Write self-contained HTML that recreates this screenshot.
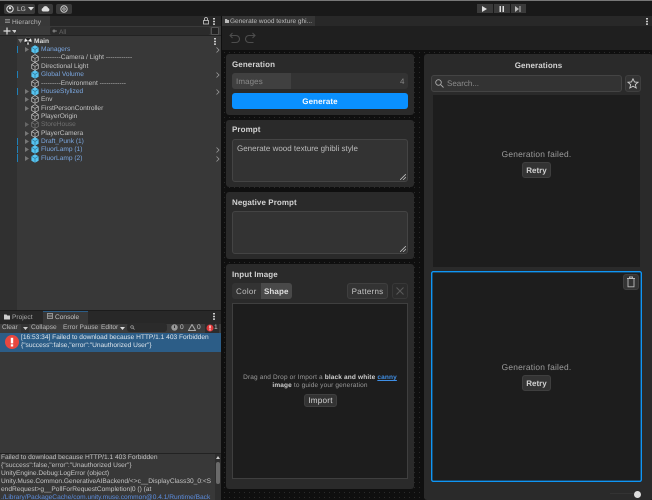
<!DOCTYPE html>
<html><head><meta charset="utf-8"><style>
html,body{margin:0;padding:0;background:#0f0f0f}
#r{position:relative;width:652px;height:500px;overflow:hidden;background:#0f0f0f;font-family:"Liberation Sans",sans-serif;font-size:6.600px;color:#c4c4c4;text-rendering:geometricPrecision}
#r div,#r span.a,#r svg{position:absolute}
.t{white-space:nowrap;line-height:9px}
.b{color:#7ba7e0}
.card{background:#2a2a2a;border-radius:3px}
.h{font-size:8px;font-weight:bold;color:#d2d2d2;letter-spacing:.08px;white-space:nowrap;line-height:10px}
.ta{background:#333;border:1px solid #444;border-radius:3px;box-sizing:border-box}
.btn{background:#333;border:1px solid #3f3f3f;border-radius:3px;box-sizing:border-box;text-align:center;color:#d0d0d0;font-size:8px;white-space:nowrap}
.c{text-align:center;white-space:nowrap}
.bar{background:#1f80b8;width:1px;height:7px;left:17px}
</style></head><body><div id="r">
<!-- top bar -->
<div style="left:0;top:0;width:652px;height:1px;background:#777"></div>
<div style="left:0;top:1px;width:652px;height:15px;background:#191919"></div>
<div style="left:4px;top:4px;width:31px;height:10px;background:#3a3a3a;border-radius:2px"></div>
<svg style="left:6px;top:5px" width="8" height="8" viewBox="0 0 8 8"><circle cx="4" cy="4" r="3.2" fill="none" stroke="#ddd" stroke-width="1.1"/><circle cx="4" cy="3.2" r="1.2" fill="#ddd"/></svg>
<div class="t" style="left:17px;top:5px;color:#ccc">LG</div>
<svg style="left:28px;top:7px" width="6" height="4"><path d="M0 0H6L3 3.5Z" fill="#ddd"/></svg>
<div style="left:38px;top:4px;width:15px;height:10px;background:#3a3a3a;border-radius:2px"></div>
<svg style="left:41px;top:5px" width="9" height="7" viewBox="0 0 9 7"><path d="M2 6.500A1.800 1.800 0 0 1 2 3 2.600 2.600 0 0 1 7 3 1.800 1.800 0 0 1 7 6.500Z" fill="#ddd"/></svg>
<div style="left:56px;top:4px;width:16px;height:10px;background:#3a3a3a;border-radius:2px"></div>
<svg style="left:60px;top:5px" width="8" height="8" viewBox="0 0 8 8"><circle cx="4" cy="4" r="3.200" fill="none" stroke="#ccc"/><circle cx="4" cy="4" r="1.200" fill="none" stroke="#ccc" stroke-width=".8"/></svg>
<div style="left:477px;top:4px;width:16px;height:9px;background:#3a3a3a"></div>
<div style="left:494px;top:4px;width:16px;height:9px;background:#3a3a3a"></div>
<div style="left:511px;top:4px;width:15px;height:9px;background:#3a3a3a"></div>
<svg style="left:482px;top:6px" width="6" height="6"><path d="M0 0L5 3 0 6Z" fill="#ddd"/></svg>
<svg style="left:499px;top:6px" width="6" height="6"><path d="M0.500 0H2V6H0.500ZM3.500 0H5V6H3.500Z" fill="#ddd"/></svg>
<svg style="left:515px;top:6px" width="7" height="6"><path d="M0 0L4 3 0 6ZM4.500 0H5.500V6H4.500Z" fill="#bbb"/></svg>

<!-- hierarchy -->
<div style="left:0;top:16px;width:221px;height:294px;background:#383838"></div>
<div style="left:0;top:16px;width:50px;height:10px;background:#383838"></div>
<div style="left:50px;top:16px;width:171px;height:10px;background:#282828"></div>
<div style="left:0;top:26px;width:221px;height:10px;background:#3a3a3a;border-bottom:1px solid #222;box-sizing:border-box"></div>
<div style="left:0;top:36px;width:17px;height:274px;background:#303030"></div>
<div style="left:221px;top:16px;width:4px;height:484px;background:#0f0f0f"></div>
<div class="t" style="left:12px;top:18px;color:#bbb;letter-spacing:.1px">Hierarchy</div>
<svg style="left:5px;top:19px" width="5" height="4"><path d="M0 .5H5M0 2H5M0 3.500H5" stroke="#999" stroke-width=".7"/></svg>
<svg style="left:203px;top:17px" width="6" height="8"><rect x=".5" y="3.500" width="5" height="3.500" fill="none" stroke="#ccc" stroke-width=".8"/><path d="M1.500 3.500V2A1.500 1.500 0 0 1 4.500 2V3.500" fill="none" stroke="#ccc" stroke-width=".8"/></svg>
<svg style="left:213px;top:18px" width="2" height="7"><path d="M0 0H2V1.500H0ZM0 2.700H2V4.200H0ZM0 5.400H2V6.900H0Z" fill="#ccc"/></svg>
<svg style="left:3px;top:27px" width="13" height="8"><path d="M4 .5V7.500M.5 4H7.500" stroke="#ddd" stroke-width="1.200"/><path d="M10 3H15L12.500 6Z" fill="#ccc" transform="translate(-1 0)"/></svg>
<div style="left:50px;top:27px;width:160px;height:8px;background:#2b2b2b;border-radius:2px"></div>
<div class="t" style="left:59px;top:28px;color:#666">All</div>
<svg style="left:52px;top:29px" width="5" height="4"><circle cx="2" cy="2" r="1.500" fill="#777"/><path d="M3 2H5" stroke="#777"/></svg>
<div style="left:211px;top:27px;width:8px;height:8px;background:#222;border-radius:1px;border:1px solid #555;box-sizing:border-box"></div>

<svg style="left:18px;top:39px" width="5" height="4"><path d="M0 0H5L2.500 4Z" fill="#888"/></svg>
<svg style="left:24px;top:37px" width="8" height="8" viewBox="0 0 8 8"><circle cx="4" cy="4" r="3.600" fill="#eee"/><path d="M4 4L1.500 1.500A3.500 3.500 0 0 1 6.500 1.500ZM4 4L7.500 5A3.500 3.500 0 0 1 5 7.500ZM4 4L3 7.500A3.500 3.500 0 0 1 .5 5Z" fill="#222"/></svg>
<div class="t" style="left:34px;top:37px;font-weight:bold;color:#ddd">Main</div>
<svg style="left:214px;top:38px" width="2" height="7"><path d="M0 0H2V1.500H0ZM0 2.700H2V4.200H0ZM0 5.400H2V6.900H0Z" fill="#ccc"/></svg>

<div class="bar" style="top:46px"></div><div class="bar" style="top:71px"></div><div class="bar" style="top:88px"></div><div class="bar" style="top:138px"></div><div class="bar" style="top:146px"></div><div class="bar" style="top:154px;height:8px"></div>

<svg style="left:25px;top:47px" width="4" height="5"><path d="M0 0L4 2.500 0 5Z" fill="#777"/></svg>
<svg style="left:25px;top:89px" width="4" height="5"><path d="M0 0L4 2.500 0 5Z" fill="#777"/></svg>
<svg style="left:25px;top:97px" width="4" height="5"><path d="M0 0L4 2.500 0 5Z" fill="#777"/></svg>
<svg style="left:25px;top:106px" width="4" height="5"><path d="M0 0L4 2.500 0 5Z" fill="#777"/></svg>
<svg style="left:25px;top:122px" width="4" height="5"><path d="M0 0L4 2.500 0 5Z" fill="#666"/></svg>
<svg style="left:25px;top:131px" width="4" height="5"><path d="M0 0L4 2.500 0 5Z" fill="#777"/></svg>
<svg style="left:25px;top:139px" width="4" height="5"><path d="M0 0L4 2.500 0 5Z" fill="#777"/></svg>
<svg style="left:25px;top:147px" width="4" height="5"><path d="M0 0L4 2.500 0 5Z" fill="#777"/></svg>
<svg style="left:25px;top:156px" width="4" height="5"><path d="M0 0L4 2.500 0 5Z" fill="#777"/></svg>

<svg style="left:31px;top:45px" width="8" height="9" viewBox="0 0 8 9"><path d="M4 .3L7.600 2.300V6.700L4 8.700 .4 6.700V2.300Z" fill="#55c3f0"/><path d="M.6 2.400L4 4.400 7.400 2.400M4 4.400V8.600" stroke="#2a6b88" stroke-width=".6" fill="none"/></svg>
<svg style="left:31px;top:70px" width="8" height="9" viewBox="0 0 8 9"><path d="M4 .3L7.600 2.300V6.700L4 8.700 .4 6.700V2.300Z" fill="#55c3f0"/><path d="M.6 2.400L4 4.400 7.400 2.400M4 4.400V8.600" stroke="#2a6b88" stroke-width=".6" fill="none"/></svg>
<svg style="left:31px;top:87px" width="8" height="9" viewBox="0 0 8 9"><path d="M4 .3L7.600 2.300V6.700L4 8.700 .4 6.700V2.300Z" fill="#55c3f0"/><path d="M.6 2.400L4 4.400 7.400 2.400M4 4.400V8.600" stroke="#2a6b88" stroke-width=".6" fill="none"/></svg>
<svg style="left:31px;top:137px" width="8" height="9" viewBox="0 0 8 9"><path d="M4 .3L7.600 2.300V6.700L4 8.700 .4 6.700V2.300Z" fill="#55c3f0"/><path d="M.6 2.400L4 4.400 7.400 2.400M4 4.400V8.600" stroke="#2a6b88" stroke-width=".6" fill="none"/></svg>
<svg style="left:31px;top:145px" width="8" height="9" viewBox="0 0 8 9"><path d="M4 .3L7.600 2.300V6.700L4 8.700 .4 6.700V2.300Z" fill="#55c3f0"/><path d="M.6 2.400L4 4.400 7.400 2.400M4 4.400V8.600" stroke="#2a6b88" stroke-width=".6" fill="none"/></svg>
<svg style="left:31px;top:154px" width="8" height="9" viewBox="0 0 8 9"><path d="M4 .3L7.600 2.300V6.700L4 8.700 .4 6.700V2.300Z" fill="#55c3f0"/><path d="M.6 2.400L4 4.400 7.400 2.400M4 4.400V8.600" stroke="#2a6b88" stroke-width=".6" fill="none"/></svg>

<svg style="left:31px;top:54px" width="8" height="9" viewBox="0 0 8 9"><path d="M4 .6L7.300 2.500V6.500L4 8.400 .7 6.500V2.500ZM.7 2.500L4 4.400 7.300 2.500M4 4.400V8.400" stroke="#c4c4c4" stroke-width=".7" fill="none"/></svg>
<svg style="left:31px;top:62px" width="8" height="9" viewBox="0 0 8 9"><path d="M4 .6L7.300 2.500V6.500L4 8.400 .7 6.500V2.500ZM.7 2.500L4 4.400 7.300 2.500M4 4.400V8.400" stroke="#c4c4c4" stroke-width=".7" fill="none"/></svg>
<svg style="left:31px;top:79px" width="8" height="9" viewBox="0 0 8 9"><path d="M4 .6L7.300 2.500V6.500L4 8.400 .7 6.500V2.500ZM.7 2.500L4 4.400 7.300 2.500M4 4.400V8.400" stroke="#c4c4c4" stroke-width=".7" fill="none"/></svg>
<svg style="left:31px;top:95px" width="8" height="9" viewBox="0 0 8 9"><path d="M4 .6L7.300 2.500V6.500L4 8.400 .7 6.500V2.500ZM.7 2.500L4 4.400 7.300 2.500M4 4.400V8.400" stroke="#c4c4c4" stroke-width=".7" fill="none"/></svg>
<svg style="left:31px;top:104px" width="8" height="9" viewBox="0 0 8 9"><path d="M4 .6L7.300 2.500V6.500L4 8.400 .7 6.500V2.500ZM.7 2.500L4 4.400 7.300 2.500M4 4.400V8.400" stroke="#c4c4c4" stroke-width=".7" fill="none"/></svg>
<svg style="left:31px;top:112px" width="8" height="9" viewBox="0 0 8 9"><path d="M4 .6L7.300 2.500V6.500L4 8.400 .7 6.500V2.500ZM.7 2.500L4 4.400 7.300 2.500M4 4.400V8.400" stroke="#c4c4c4" stroke-width=".7" fill="none"/></svg>
<svg style="left:31px;top:120px" width="8" height="9" viewBox="0 0 8 9"><path d="M4 .6L7.300 2.500V6.500L4 8.400 .7 6.500V2.500ZM.7 2.500L4 4.400 7.300 2.500M4 4.400V8.400" stroke="#777" stroke-width=".7" fill="none"/></svg>
<svg style="left:31px;top:129px" width="8" height="9" viewBox="0 0 8 9"><path d="M4 .6L7.300 2.500V6.500L4 8.400 .7 6.500V2.500ZM.7 2.500L4 4.400 7.300 2.500M4 4.400V8.400" stroke="#c4c4c4" stroke-width=".7" fill="none"/></svg>

<div class="t b" style="left:41px;top:45px">Managers</div>
<div class="t" style="left:41px;top:53px">---------Camera / Light ------------</div>
<div class="t" style="left:41px;top:62px">Directional Light</div>
<div class="t b" style="left:41px;top:70px">Global Volume</div>
<div class="t" style="left:41px;top:79px">---------Environment ------------</div>
<div class="t b" style="left:41px;top:87px">HouseStylized</div>
<div class="t" style="left:41px;top:95px">Env</div>
<div class="t" style="left:41px;top:104px">FirstPersonController</div>
<div class="t" style="left:41px;top:112px">PlayerOrigin</div>
<div class="t" style="left:41px;top:120px;color:#707070">StoreHouse</div>
<div class="t" style="left:41px;top:129px">PlayerCamera</div>
<div class="t b" style="left:41px;top:137px">Draft_Punk (1)</div>
<div class="t b" style="left:41px;top:145px">FluorLamp (1)</div>
<div class="t b" style="left:41px;top:154px">FluorLamp (2)</div>
<svg style="left:216px;top:47px" width="4" height="6"><path d="M.5 .5L3 3 .5 5.500" fill="none" stroke="#999" stroke-width=".8"/></svg>
<svg style="left:216px;top:72px" width="4" height="6"><path d="M.5 .5L3 3 .5 5.500" fill="none" stroke="#999" stroke-width=".8"/></svg>
<svg style="left:216px;top:89px" width="4" height="6"><path d="M.5 .5L3 3 .5 5.500" fill="none" stroke="#999" stroke-width=".8"/></svg>
<svg style="left:216px;top:147px" width="4" height="6"><path d="M.5 .5L3 3 .5 5.500" fill="none" stroke="#999" stroke-width=".8"/></svg>
<svg style="left:216px;top:156px" width="4" height="6"><path d="M.5 .5L3 3 .5 5.500" fill="none" stroke="#999" stroke-width=".8"/></svg>

<!-- console -->
<div style="left:0;top:310px;width:221px;height:190px;background:#383838"></div>
<div style="left:0;top:310px;width:221px;height:1px;background:#1c1c1c"></div>
<div style="left:0;top:311px;width:221px;height:13px;background:#282828"></div>
<div style="left:43px;top:311px;width:45px;height:13px;background:#383838;border-top:1px solid #2c5d87;box-sizing:border-box"></div>
<svg style="left:4px;top:314px" width="6" height="6"><path d="M0 .5H2.500L3.300 1.500H6V5.500H0Z" fill="#ccc"/></svg>
<div class="t" style="left:12px;top:313px;color:#aaa">Project</div>
<svg style="left:47px;top:313px" width="6" height="6"><rect x=".5" y=".5" width="5" height="5" fill="none" stroke="#aaa" stroke-width=".8"/><path d="M1 2.200H5M1 3.800H5" stroke="#aaa" stroke-width=".6"/></svg>
<div class="t" style="left:55px;top:313px;color:#c4c4c4">Console</div>
<svg style="left:213px;top:313px" width="2" height="7"><path d="M0 0H2V1.500H0ZM0 2.700H2V4.200H0ZM0 5.400H2V6.900H0Z" fill="#ccc"/></svg>
<div style="left:0;top:324px;width:221px;height:9px;background:#3c3c3c"></div>
<div class="t" style="left:2px;top:323px;color:#bbb">Clear</div>
<div style="left:21px;top:324px;width:8px;height:9px;background:#333"></div>
<svg style="left:23px;top:327px" width="5" height="3"><path d="M0 0H5L2.500 3Z" fill="#ccc"/></svg>
<div class="t" style="left:31px;top:323px;color:#bbb">Collapse</div>
<div class="t" style="left:63px;top:323px;color:#bbb">Error Pause</div>
<div class="t" style="left:101px;top:323px;color:#bbb">Editor</div>
<svg style="left:120px;top:327px" width="5" height="3"><path d="M0 0H5L2.500 3Z" fill="#ddd"/></svg>
<div style="left:127px;top:323px;width:40px;height:9px;background:#2b2b2b;border-radius:3px"></div>
<svg style="left:130px;top:325px" width="5" height="5"><circle cx="2" cy="2" r="1.300" fill="none" stroke="#aaa" stroke-width=".7"/><path d="M3 3L4.500 4.500" stroke="#aaa" stroke-width=".7"/></svg>
<svg style="left:171px;top:324px" width="7" height="7"><circle cx="3.500" cy="3.500" r="3.200" fill="#999"/><rect x="3" y="1.500" width="1" height="2.500" fill="#333"/></svg>
<div class="t" style="left:180px;top:323px">0</div>
<svg style="left:188px;top:324px" width="8" height="7"><path d="M4 .5L7.500 6.500H.5Z" fill="none" stroke="#aaa"/></svg>
<div class="t" style="left:197px;top:323px">0</div>
<div style="left:205px;top:324px;width:14px;height:9px;background:#2c2c2c"></div>
<svg style="left:206px;top:324px" width="8" height="8"><circle cx="4" cy="4" r="3.500" fill="#e0393a"/><rect x="3.400" y="1.500" width="1.200" height="3" fill="#fff"/><rect x="3.400" y="5.200" width="1.200" height="1.200" fill="#fff"/></svg>
<div class="t" style="left:214px;top:323px">1</div>
<div style="left:0;top:333px;width:221px;height:19px;background:#2c5d87"></div>
<svg style="left:5px;top:335px" width="14" height="14"><circle cx="7" cy="7" r="7" fill="#e8473f"/><rect x="5.800" y="2.800" width="2.400" height="5.600" fill="#fff"/><rect x="5.800" y="9.300" width="2.400" height="2.200" fill="#fff"/></svg>
<div class="t" style="left:21px;top:334px;color:#dfe6ec;line-height:8px">[16:53:34] Failed to download because HTTP/1.1 403 Forbidden<br>{"success":false,"error":"Unauthorized User"}</div>
<div style="left:0;top:453px;width:221px;height:1px;background:#222"></div>
<div class="t" style="left:1px;top:454px;color:#c4c4c4;line-height:7.900px;font-size:6.600px">Failed to download because HTTP/1.1 403 Forbidden<br>{"success":false,"error":"Unauthorized User"}<br>UnityEngine.Debug:LogError (object)<br>Unity.Muse.Common.GenerativeAIBackend/&lt;&gt;c__DisplayClass30_0:&lt;S<br>endRequest&gt;g__PollForRequestCompletion|0 () (at<br><span style="color:#5c8ee0">./Library/PackageCache/com.unity.muse.common@0.4.1/Runtime/Back</span></div>
<div style="left:215px;top:454px;width:6px;height:46px;background:#2e2e2e"></div>
<div style="left:216px;top:462px;width:4px;height:22px;background:#6a6a6a;border-radius:2px"></div>
<svg style="left:216px;top:456px" width="4" height="3"><path d="M0 3L2 0 4 3Z" fill="#ccc"/></svg>

<!-- muse window -->
<div style="left:222px;top:16px;width:430px;height:10px;background:#282828"></div>
<div style="left:222px;top:16px;width:93px;height:10px;background:#353535"></div>
<svg style="left:225px;top:19px" width="4" height="4"><path d="M0 0H2L2.500 1H4V4H0Z" fill="#bbb"/></svg>
<div class="t" style="left:230px;top:17px;font-size:6.500px;color:#bdbdbd">Generate wood texture ghi...</div>
<svg style="left:646px;top:18px" width="2" height="7"><path d="M0 0H2V1.500H0ZM0 2.700H2V4.200H0ZM0 5.400H2V6.900H0Z" fill="#ccc"/></svg>
<div style="left:222px;top:26px;width:430px;height:25px;background:#1f1f1f"></div>
<svg style="left:229px;top:32px" width="11" height="12" viewBox="0 0 11 12"><path d="M3.500 1L1 3.500 3.500 6M1 3.500H7A3.300 3.300 0 0 1 7 10.500H2.500" fill="none" stroke="#4d4d4d" stroke-width="1.100"/></svg>
<svg style="left:245px;top:32px" width="11" height="12" viewBox="0 0 11 12"><path d="M7.500 1L10 3.500 7.500 6M10 3.500H4A3.300 3.300 0 0 0 4 10.500H8.500" fill="none" stroke="#4d4d4d" stroke-width="1.100"/></svg>
<div style="left:222px;top:50px;width:430px;height:450px;background-color:#0f0f0f;background-image:radial-gradient(#2b2b2b .5px,transparent .7px);background-size:5px 5px"></div>

<!-- generation -->
<div class="card" style="left:226px;top:54px;width:188px;height:61px"></div>
<div class="h" style="left:232px;top:60px">Generation</div>
<div style="left:232px;top:73px;width:176px;height:16px;background:#333;border-radius:3px"></div>
<div style="left:232px;top:73px;width:59px;height:16px;background:#404040;border-radius:3px 0 0 3px"></div>
<div class="t" style="left:236px;top:77px;font-size:8px;color:#8a8a8a;letter-spacing:.1px">Images</div>
<div class="t" style="left:400px;top:77px;font-size:8px;color:#8a8a8a">4</div>
<div style="left:232px;top:93px;width:176px;height:16px;background:#0a90ff;border-radius:3px"></div>
<div class="c" style="left:232px;top:93px;width:176px;line-height:17px;font-size:8px;font-weight:bold;color:#f2f8ff;letter-spacing:.1px">Generate</div>

<!-- prompt -->
<div class="card" style="left:226px;top:120px;width:188px;height:67px"></div>
<div class="h" style="left:232px;top:125px">Prompt</div>
<div class="ta" style="left:232px;top:139px;width:176px;height:43px"></div>
<div class="t" style="left:237px;top:144px;font-size:8px;color:#bbb;letter-spacing:0">Generate wood texture ghibli style</div>
<svg style="left:400px;top:174px" width="6" height="6"><path d="M0 6L6 0M3 6L6 3" stroke="#bbb" stroke-width=".8"/></svg>

<!-- negative -->
<div class="card" style="left:226px;top:192px;width:188px;height:67px"></div>
<div class="h" style="left:232px;top:198px">Negative Prompt</div>
<div class="ta" style="left:232px;top:211px;width:176px;height:43px"></div>
<svg style="left:400px;top:246px" width="6" height="6"><path d="M0 6L6 0M3 6L6 3" stroke="#bbb" stroke-width=".8"/></svg>

<!-- input image -->
<div class="card" style="left:226px;top:264px;width:188px;height:225px"></div>
<div class="h" style="left:232px;top:270px">Input Image</div>
<div style="left:232px;top:283px;width:60px;height:16px;background:#333;border-radius:3px"></div>
<div style="left:261px;top:283px;width:31px;height:16px;background:#494949;border-radius:0 3px 3px 0"></div>
<div class="t" style="left:236px;top:287px;font-size:8px;font-weight:normal;color:#bdbdbd;letter-spacing:.3px">Color</div>
<div class="t" style="left:264px;top:287px;font-size:8px;font-weight:bold;color:#ddd;letter-spacing:.1px">Shape</div>
<div class="btn" style="left:347px;top:283px;width:41px;height:16px;line-height:15px;letter-spacing:.25px;color:#c4c4c4">Patterns</div>
<div class="btn" style="left:392px;top:283px;width:16px;height:16px;background:#2c2c2c;border-color:#383838"></div>
<svg style="left:396px;top:287px" width="8" height="8"><path d="M.5 .5L7.500 7.500M7.500 .5L.5 7.500" stroke="#5a5a5a"/></svg>
<div style="left:232px;top:303px;width:176px;height:176px;background:#1d1d1d;border:1px solid #3f3f3f;box-sizing:border-box"></div>
<div class="c" style="left:232px;top:374px;width:176px;font-size:6.500px;line-height:8px;color:#9a9a9a;letter-spacing:.15px">Drag and Drop or Import a <b style="color:#d0d0d0">black and white</b> <b style="color:#3f8fe6;text-decoration:underline">canny</b><br><b style="color:#d0d0d0">image</b> to guide your generation</div>
<div class="btn" style="left:304px;top:394px;width:33px;height:13px;line-height:12px;letter-spacing:.2px;font-size:8.200px">Import</div>

<!-- generations -->
<div class="card" style="left:424px;top:54px;width:229px;height:446px"></div>
<div class="c h" style="left:424px;top:60px;width:229px;line-height:11px">Generations</div>
<div class="ta" style="left:431px;top:75px;width:191px;height:17px"></div>
<svg style="left:435px;top:79px" width="9" height="9"><circle cx="3.500" cy="3.500" r="2.800" fill="none" stroke="#aaa" stroke-width=".9"/><path d="M5.500 5.500L8.500 8.500" stroke="#aaa" stroke-width=".9"/></svg>
<div class="t" style="left:447px;top:79px;font-size:8px;color:#8c8c8c">Search...</div>
<div class="btn" style="left:625px;top:75px;width:16px;height:17px"></div>
<svg style="left:627px;top:78px" width="12" height="11" viewBox="0 0 12 11"><path d="M6 .8L7.500 4 11 4.300 8.300 6.600 9.200 10 6 8.200 2.800 10 3.700 6.600 1 4.300 4.500 4Z" fill="none" stroke="#ccc" stroke-width=".9"/></svg>
<div style="left:433px;top:95px;width:207px;height:172px;background:#1d1d1d"></div>
<div class="c" style="left:433px;top:149px;width:207px;font-size:8.400px;line-height:10px;color:#9c9c9c;letter-spacing:.2px">Generation failed.</div>
<div class="btn" style="left:522px;top:162px;width:29px;height:16px;line-height:15px;font-weight:bold">Retry</div>
<div style="left:431px;top:271px;width:211px;height:211px;background:#1d1d1d;border-radius:2px"></div>
<svg style="left:431px;top:271px" width="211" height="211"><rect x=".7" y=".7" width="209.600" height="209.600" rx="1.500" fill="none" stroke="#0f96f5" stroke-width="1.400"/></svg>
<div class="c" style="left:433px;top:362px;width:207px;font-size:8.400px;line-height:10px;color:#9c9c9c;letter-spacing:.2px">Generation failed.</div>
<div class="btn" style="left:522px;top:375px;width:29px;height:16px;line-height:15px;font-weight:bold">Retry</div>
<div class="btn" style="left:623px;top:274px;width:16px;height:16px"></div>
<svg style="left:626px;top:276px" width="10" height="12" viewBox="0 0 10 12"><path d="M1 2.500H9M3.500 2.500V1H6.500V2.500M2 2.500V10.800H8V2.500" fill="none" stroke="#bbb" stroke-width=".9"/></svg>
<div style="left:610px;top:493px;width:24px;height:1px;background:#333"></div>
<div style="left:634px;top:491px;width:7px;height:7px;background:#ddd;border-radius:50%"></div>
</div></body></html>
